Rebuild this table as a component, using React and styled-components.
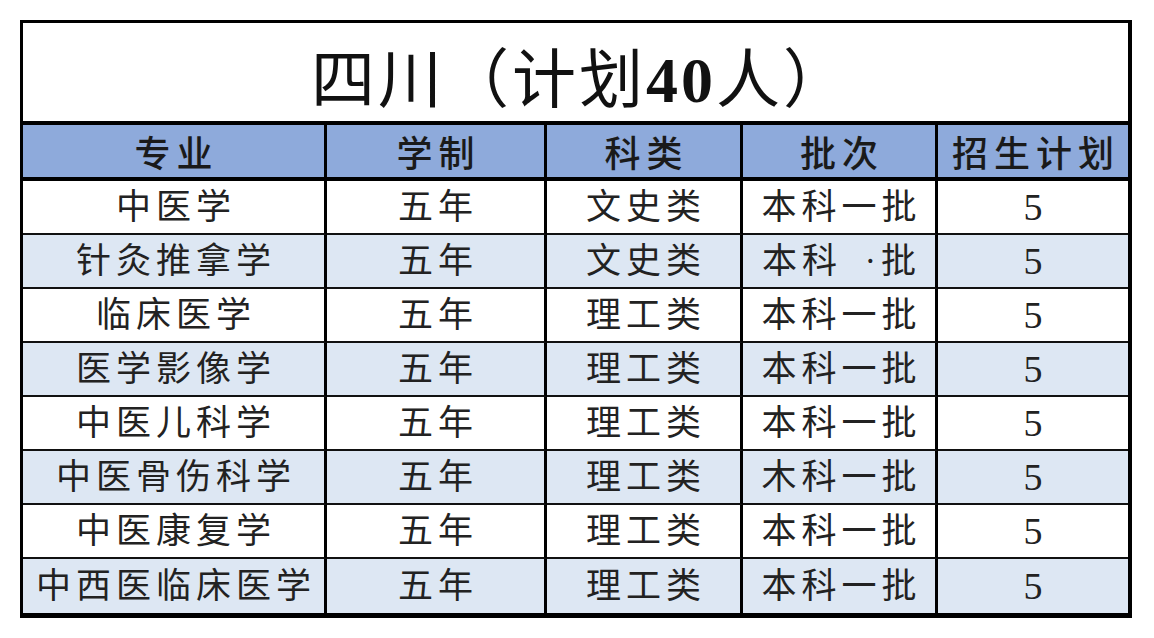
import React from "react";
import styled, { createGlobalStyle } from "styled-components";

const GlobalStyle = createGlobalStyle`
    * {
        box-sizing: border-box;
    }
    body {
        margin: 0;
        background: #ffffff;
        font-family: "Liberation Serif", "Noto Sans CJK SC", serif;
    }
`;

const columns = [
    { key: "major", label: "专业", width: 304 },
    { key: "years", label: "学制", width: 220 },
    { key: "kind", label: "科类", width: 196 },
    { key: "batch", label: "批次", width: 195 },
    { key: "plan", label: "招生计划", width: 190 },
];

// second row keeps the broken "一" the scan shows
const rows = [
    { major: "中医学", years: "五年", kind: "文史类", batch: "本科一批", plan: 5 },
    { major: "针灸推拿学", years: "五年", kind: "文史类", batch: "本科\u2002·批", plan: 5 },
    { major: "临床医学", years: "五年", kind: "理工类", batch: "本科一批", plan: 5 },
    { major: "医学影像学", years: "五年", kind: "理工类", batch: "本科一批", plan: 5 },
    { major: "中医儿科学", years: "五年", kind: "理工类", batch: "本科一批", plan: 5 },
    { major: "中医骨伤科学", years: "五年", kind: "理工类", batch: "木科一批", plan: 5 },
    { major: "中医康复学", years: "五年", kind: "理工类", batch: "本科一批", plan: 5 },
    { major: "中西医临床医学", years: "五年", kind: "理工类", batch: "本科一批", plan: 5 },
];

const App = () => {
    return (
        <Page>
            <GlobalStyle />
            <Table>
                <colgroup>
                    {columns.map((col) => (
                        <col key={col.key} style={{ width: col.width }} />
                    ))}
                </colgroup>
                <thead>
                    <tr>
                        <TitleCell colSpan={5}>
                            四川（计划<Bold>40</Bold>人）
                        </TitleCell>
                    </tr>
                    <tr>
                        {columns.map((col, i) => (
                            <HeadCell key={col.key} $last={i === columns.length - 1}>
                                {col.label}
                            </HeadCell>
                        ))}
                    </tr>
                </thead>
                <tbody>
                    {rows.map((row, r) => (
                        <tr key={r}>
                            {columns.map((col, i) => (
                                <Cell
                                    key={col.key}
                                    $shaded={r % 2 === 1}
                                    $last={i === columns.length - 1}
                                    $bottom={r === rows.length - 1}
                                    $number={col.key === "plan"}
                                >
                                    {row[col.key]}
                                </Cell>
                            ))}
                        </tr>
                    ))}
                </tbody>
            </Table>
        </Page>
    );
};

const Page = styled.div`
    width: 1154px;
    height: 638px;
    padding: 20px 0 0 20px;
    background: #ffffff;
`;
const Table = styled.table`
    width: 1112px;
    table-layout: fixed;
    border-collapse: separate;
    border-spacing: 0;
    border-top: 3px solid #000;
    border-left: 3px solid #000;
    border-right: 4px solid #000;
    border-bottom: 5px solid #000;
    color: #1c1c1c;
`;
const TitleCell = styled.th`
    height: 102px;
    border-bottom: 4px solid #000;
    background: #ffffff;
    font-size: 64px;
    font-weight: 400;
    letter-spacing: 3px;
    text-align: center;
    padding: 3px 0 0 10px;
    color: #111;
`;
const Bold = styled.span`
    font-weight: 700;
`;
const HeadCell = styled.th`
    height: 54px;
    padding: 0;
    background: #8eaadb;
    border-bottom: 4px solid #000;
    border-right: ${(p) => (p.$last ? "none" : "3px solid #000")};
    font-size: 36px;
    font-weight: 500;
    letter-spacing: 6px;
    text-indent: 6px;
    text-align: center;
    color: #1a1a1a;
`;
const Cell = styled.td`
    height: 54px;
    padding: 0;
    background: ${(p) => (p.$shaded ? "#dde7f3" : "#ffffff")};
    border-bottom: ${(p) => (p.$bottom ? "none" : "2px solid #111")};
    border-right: ${(p) => (p.$last ? "none" : "3px solid #000")};
    font-size: ${(p) => (p.$number ? "38px" : "35px")};
    font-weight: 400;
    letter-spacing: ${(p) => (p.$number ? "0" : "5px")};
    text-indent: ${(p) => (p.$number ? "0" : "5px")};
    text-align: center;
    line-height: 1;
    color: #222;
`;

export default App;
